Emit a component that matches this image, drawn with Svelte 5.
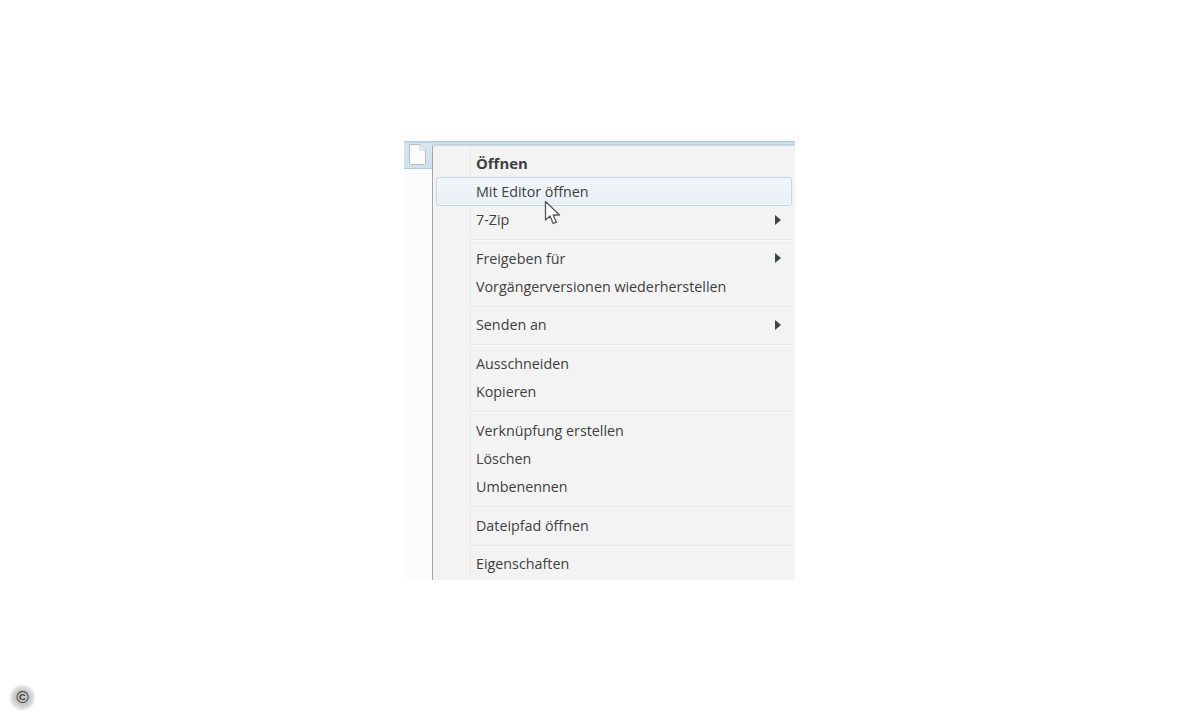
<script>
  const groups = [
    [{ t: 'Öffnen', bold: true }, { t: 'Mit Editor öffnen', hot: true }, { t: '7-Zip', sub: true }],
    [{ t: 'Freigeben für', sub: true }, { t: 'Vorgängerversionen wiederherstellen' }],
    [{ t: 'Senden an', sub: true }],
    [{ t: 'Ausschneiden' }, { t: 'Kopieren' }],
    [{ t: 'Verknüpfung erstellen' }, { t: 'Löschen' }, { t: 'Umbenennen' }],
    [{ t: 'Dateipfad öffnen' }],
    [{ t: 'Eigenschaften' }]
  ];
</script>

<div class="page">
  <div class="shot">
    <div class="topline"></div>
    <div class="body">
      <div class="strip"></div>
      <div class="menu">
        {#each groups as group, i}
          {#if i > 0}<div class="sep"></div>{/if}
          {#each group as item}
            <div class="row" class:hot={item.hot}>
              <span class="label" class:bold={item.bold}>{item.t}</span>
              {#if item.sub}<span class="arrow"></span>{/if}
            </div>
          {/each}
        {/each}
      </div>
    </div>

    <div class="tile">
      <svg width="20" height="21" viewBox="0 0 20 21">
        <path d="M2.5 .5H13L18.5 6V19.5A1 1 0 0 1 17.5 20.5H3.5A1 1 0 0 1 2.5 19.5Z" fill="#fbfcfc" stroke="#b4bdc4"/>
        <path d="M13 .5V6H18.5" fill="#f0f2f4" stroke="#cbd2d8"/>
      </svg>
    </div>

    <svg class="cursor" width="18" height="26" viewBox="0 0 18 26">
      <path d="M1.5 1.5V20L6 16L9.2 23.5L12.3 22.2L9.2 15H15.5Z" fill="#fff" stroke="#55595e" stroke-width="1.3" stroke-linejoin="round"/>
    </svg>
  </div>

  <div class="copy"><span>©</span></div>
</div>

<style>
  :global(body) {
    margin: 0;
    background: #fff;
  }
  .page {
    position: relative;
    width: 1200px;
    height: 720px;
    padding: 141px 0 0 404px;
    box-sizing: border-box;
    overflow: hidden;
    font-family: "Open Sans", "Noto Sans", sans-serif;
  }
  .shot {
    position: relative;
    width: 391px;
    height: 439px;
    display: flex;
    flex-direction: column;
  }
  .topline {
    height: 5px;
    flex: none;
    box-sizing: border-box;
    background: linear-gradient(#a9c9df 0, #c9dce9 40%, #dbe6ed 60%, #a8bfcc 80%, #f0f0f0 100%);
  }
  .body {
    flex: 1;
    display: flex;
    min-height: 0;
  }
  .strip {
    width: 28px;
    flex: none;
    background: #fcfcfc;
    border-right: 1px solid #a2a6a9;
  }
  .menu {
    flex: 1;
    padding: 3px 3px 0 0;
    background: linear-gradient(90deg, #f3f3f3 0, #f3f3f3 37px, #e6e7e7 37px, #e6e7e7 38px, #f8f8f8 38px, #f3f3f3 39px);
    overflow: hidden;
  }
  .row {
    height: 28.25px;
    display: flex;
    align-items: center;
    justify-content: space-between;
    box-sizing: border-box;
    padding: 0 11px 0 43px;
    color: #3f3f3f;
    font-size: 14.3px;
  }
  .row.hot {
    margin-left: 3px;
    padding-left: 39px;
    border: 1px solid #c3d5e4;
    border-radius: 3px;
    background: linear-gradient(#f2f5f9, #e9f0f7);
    box-shadow: inset 0 0 0 1px #f4f7fa;
  }
  .bold {
    font-weight: 700;
    font-size: 14.9px;
  }
  .arrow {
    width: 0;
    height: 0;
    border-left: 6px solid #3f4449;
    border-top: 5px solid transparent;
    border-bottom: 5px solid transparent;
  }
  .sep {
    height: 10.25px;
    margin-left: 38px;
    display: flex;
    align-items: flex-end;
    box-sizing: border-box;
    padding-bottom: 3px;
  }
  .sep::before {
    content: "";
    display: block;
    width: 100%;
    height: 2px;
    background: linear-gradient(#e6e6e6 50%, #fafafa 50%);
  }
  .tile {
    position: absolute;
    left: 0;
    top: 2px;
    width: 28px;
    height: 26px;
    box-sizing: border-box;
    padding: 1px 0 0 3px;
    background: linear-gradient(#d8e6f1, #cfe0ec);
    border-bottom: 1px solid #b2c9d9;
  }
  .tile svg {
    display: block;
  }
  .cursor {
    position: absolute;
    left: 140px;
    top: 59px;
  }
  .copy {
    position: absolute;
    left: 9px;
    top: 684px;
    width: 27px;
    height: 27px;
    border-radius: 50%;
    display: flex;
    align-items: center;
    justify-content: center;
    background: radial-gradient(circle, #c8c8c8 0, #c8c8c8 38%, #e2e2e2 58%, #fff 72%);
  }
  .copy span {
    width: 15px;
    height: 15px;
    display: flex;
    align-items: center;
    justify-content: center;
    font: 700 17px/15px "Liberation Sans", sans-serif;
    color: #444;
  }
</style>
